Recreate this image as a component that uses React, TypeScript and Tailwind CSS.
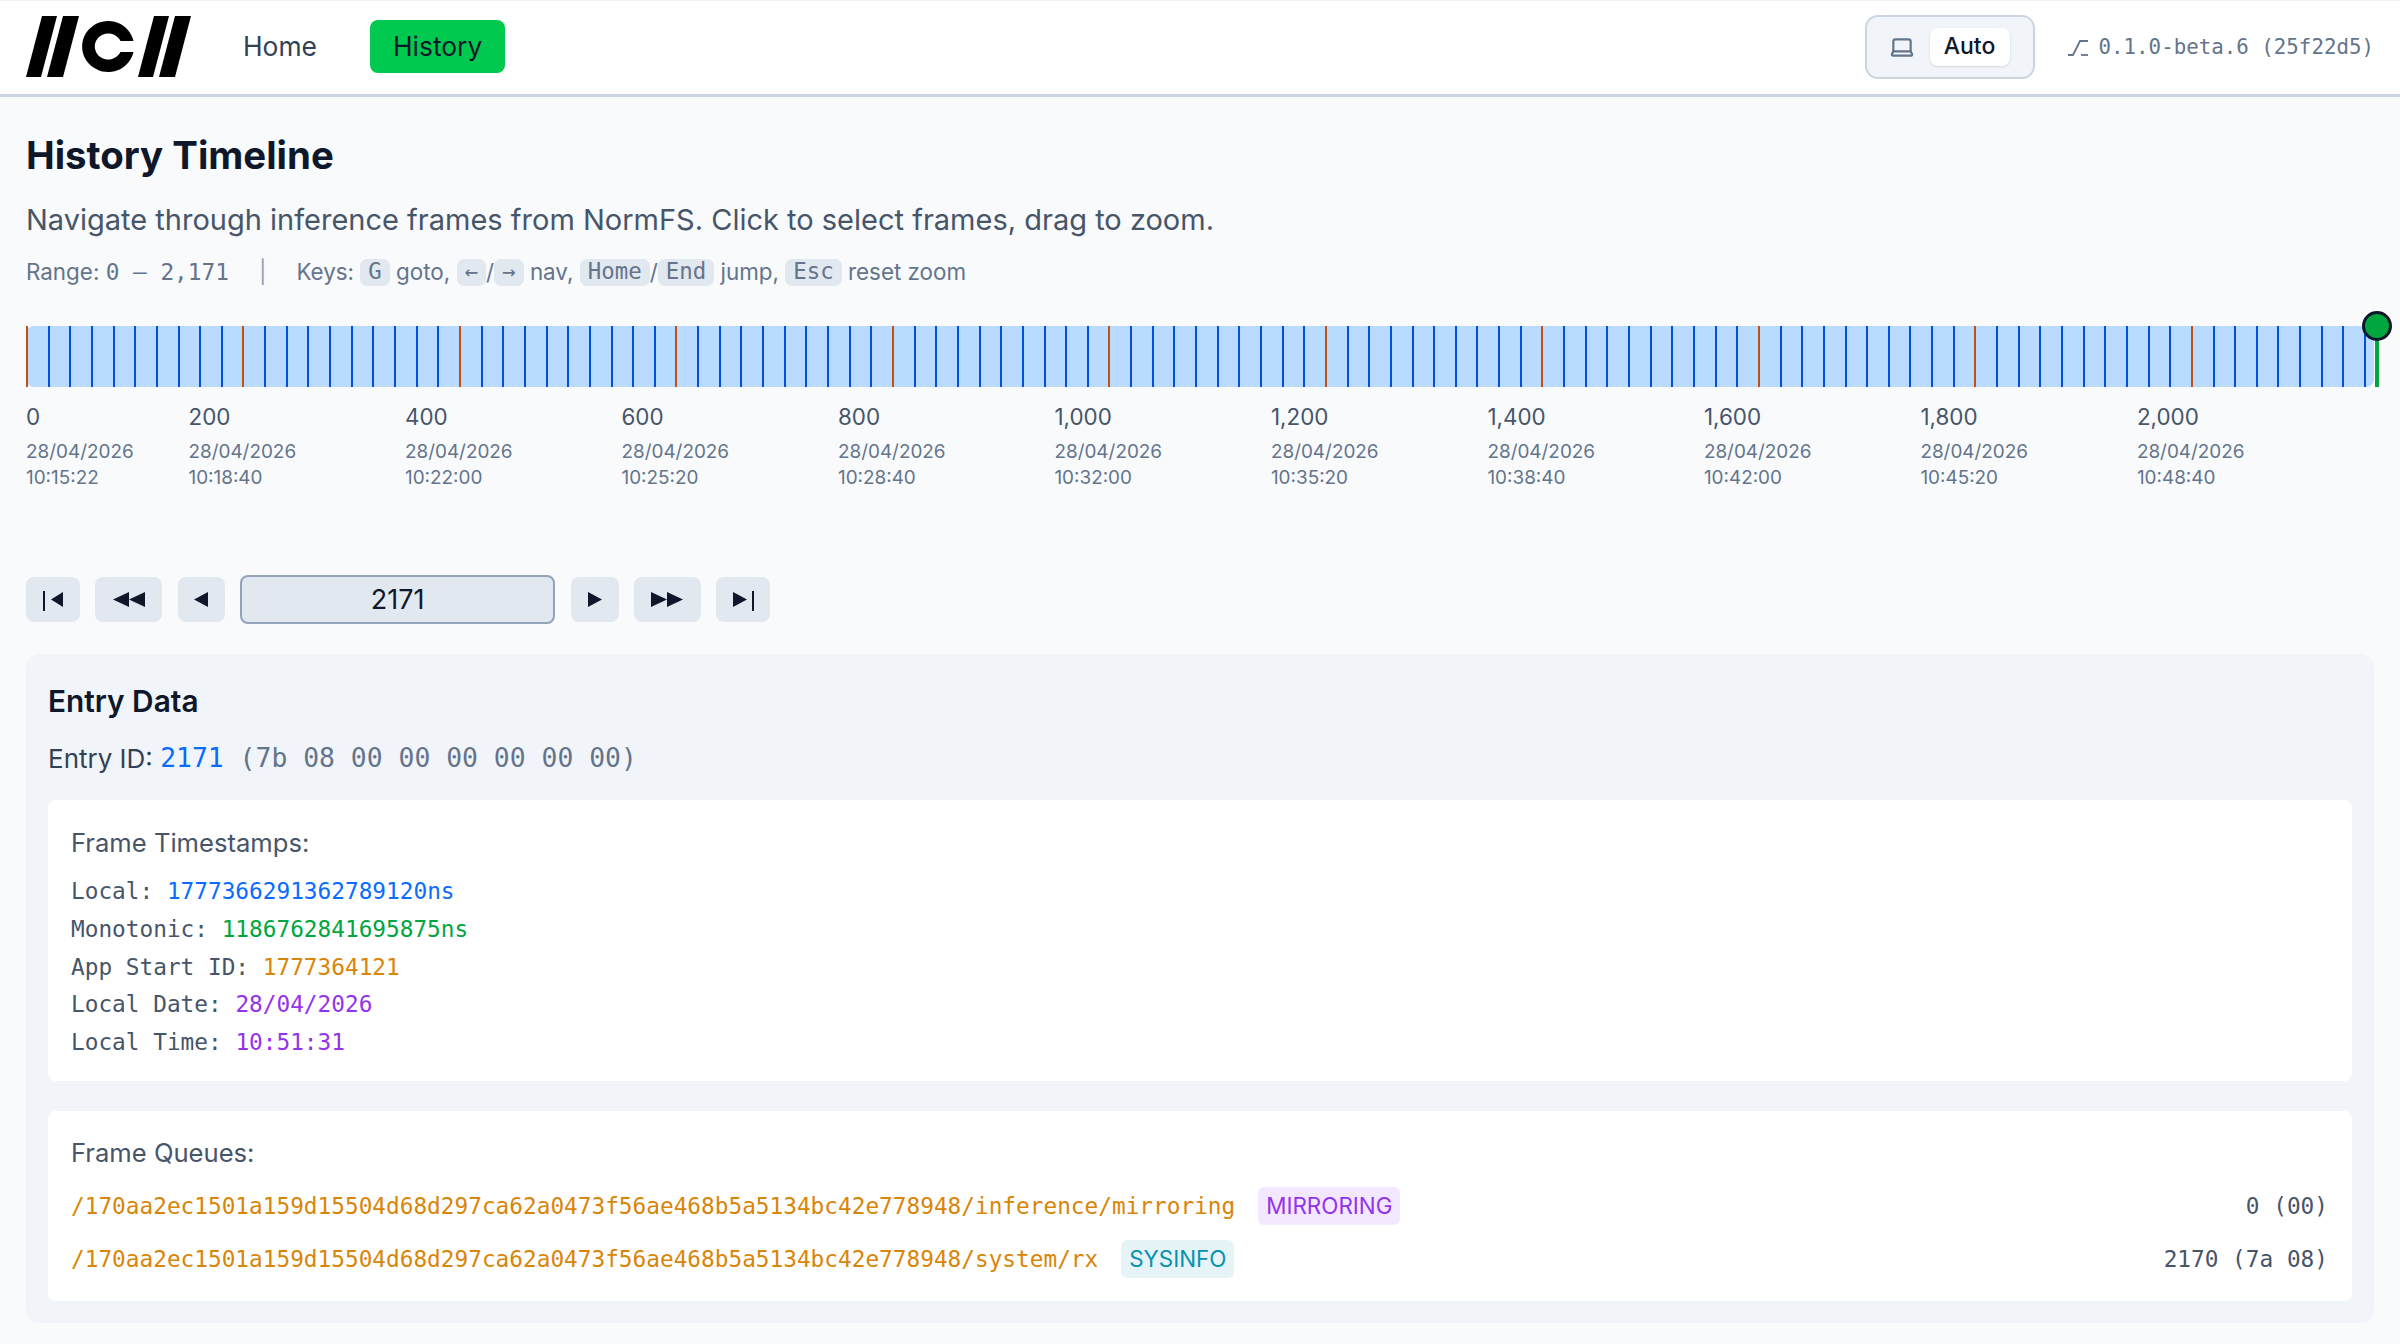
import React from 'react';
import { Laptop } from 'lucide-react';

const MONO = 'font-["DejaVu_Sans_Mono",monospace]';
const PX_PER_ENTRY = 2350 / 2171;

const Logo: React.FC = () => (
  <svg width="168" height="62" viewBox="0 0 168 62" className="shrink-0">
    <polygon points="0,61 15,61 31,0 16,0" fill="#000" />
    <polygon points="21,61 37,61 53,0 37,0" fill="#000" />
    <path d="M107.5 25 A26 25.5 0 1 0 107.5 36 L94.5 36 A13.5 13 0 1 1 94.5 25 Z" fill="#000" />
    <polygon points="112,61 127,61 143,0 128,0" fill="#000" />
    <polygon points="133,61 149,61 165,0 149,0" fill="#000" />
  </svg>
);

const Kbd: React.FC<{ children: React.ReactNode }> = ({ children }) => (
  <kbd className={`${MONO} bg-[#e2e8f0] rounded-[7px] px-[8px] h-[27px] flex items-center text-[22.4px] text-[#64748b]`}>{children}</kbd>
);

const Ctrl: React.FC<{ w: string; children: React.ReactNode }> = ({ w, children }) => (
  <button className={`${w} h-[45px] bg-[#e2e8f0] rounded-[8px] flex items-center justify-center`}>{children}</button>
);

const Tri: React.FC<{ dir: 'l' | 'r'; w?: number }> = ({ dir, w = 16 }) => (
  <svg width={w} height="15" viewBox={`0 0 ${w} 15`}>
    <polygon points={dir === 'l' ? `${w},0 ${w},15 0,7.5` : `0,0 0,15 ${w},7.5`} fill="#0f172a" />
  </svg>
);

const Bar = () => <span className="w-[2px] h-[20px] mt-[3px] bg-[#0f172a]" />;

const Timeline: React.FC = () => {
  const ticks = Array.from({ length: 109 }, (_, i) => i * 20);
  const labels = [
    ['0', '10:15:22'], ['200', '10:18:40'], ['400', '10:22:00'], ['600', '10:25:20'],
    ['800', '10:28:40'], ['1,000', '10:32:00'], ['1,200', '10:35:20'], ['1,400', '10:38:40'],
    ['1,600', '10:42:00'], ['1,800', '10:45:20'], ['2,000', '10:48:40'],
  ];
  return (
    <div className="relative h-[250px] mt-[39px]">
      <div className="relative h-[61px] bg-[#b8dbff] rounded-[8px]">
        {ticks.map((t) => (
          <span
            key={t}
            className={`absolute top-0 bottom-0 w-[2px] ${t % 200 === 0 ? 'bg-[#c2500f]' : 'bg-[#0050e6]'}`}
            style={{ left: t * PX_PER_ENTRY }}
          />
        ))}
        <span className="absolute right-[-5px] top-0 bottom-0 w-[4px] bg-[#00a63e]" />
        <span className="absolute right-[-18px] top-[-15px] w-[30px] h-[30px] rounded-full bg-[#00a63e] border-[3px] border-[#0f172a]" />
      </div>
      {labels.map(([n, time], i) => (
        <div key={n} className="absolute top-[75px]" style={{ left: i === 0 ? 0 : i * 200 * PX_PER_ENTRY - 54 }}>
          <div className="text-[22.4px] leading-[32px] text-[#475569]">{n}</div>
          <div className="mt-[6px] text-[18.9px] leading-[25.6px] text-[#64748b]">
            <div>28/04/2026</div>
            <div>{time}</div>
          </div>
        </div>
      ))}
    </div>
  );
};

const Stamp: React.FC<{ label: string; value: string; color: string }> = ({ label, value, color }) => (
  <div className="h-[37.8px] leading-[37.8px]">
    {label} <span className={color}>{value}</span>
  </div>
);

const Queue: React.FC<{ path: string; badge: string; badgeClass: string; value: string }> = ({ path, badge, badgeClass, value }) => (
  <div className="h-[38px] flex items-center justify-between">
    <div className="flex items-center gap-[23px]">
      <span className={`${MONO} text-[22.75px] text-[#d98508]`}>{path}</span>
      <span className={`h-[38px] px-[8px] rounded-[6px] flex items-center text-[22.4px] ${badgeClass}`}>{badge}</span>
    </div>
    <span className={`${MONO} text-[22.75px] text-[#475569]`}>{value}</span>
  </div>
);

const App: React.FC = () => (
  <div className='min-h-[1344px] bg-[#f8fafc] font-["Inter",sans-serif] text-[#0f172a]'>
    <header className="h-[97px] bg-white border-t border-t-[#f1f5f9] border-b-[3px] border-b-[#cbd5e1] pl-[26px] pr-[26px] pb-[2px] flex items-center">
      <Logo />
      <nav className="flex items-center ml-[49px] gap-[53px]">
        <a className="text-[26.4px] text-[#334155]">Home</a>
        <a className="h-[53px] px-[23px] flex items-center rounded-[8px] bg-[#00c950] text-[26.4px] text-[#0f172a]">History</a>
      </nav>
      <div className="ml-auto flex items-center">
        <div className="w-[170px] h-[64px] rounded-[13px] bg-[#f1f5f9] border-2 border-[#cbd5e1] flex items-center pl-[22px] gap-[15px]">
          <Laptop size={26} strokeWidth={2} className="text-[#64748b]" />
          <span className="w-[80px] h-[38px] rounded-[8px] bg-white shadow-sm flex items-center justify-center text-[23px] font-medium text-[#0f172a]">Auto</span>
        </div>
        <div className={`${MONO} ml-[33px] mt-[2px] flex items-center gap-[11px] text-[20.8px] text-[#64748b]`}>
          <svg width="20" height="16" viewBox="0 0 20 16" fill="none" stroke="#64748b" strokeWidth="1.8">
            <path d="M0 15 H5 L12 1 H20" />
            <path d="M13 15 H20" />
          </svg>
          0.1.0-beta.6 (25f22d5)
        </div>
      </div>
    </header>

    <main className="pl-[26px] pr-[26px] pt-[36px]">
      <h1 className="text-[38.4px] leading-[44px] font-bold">History Timeline</h1>
      <p className="mt-[21px] text-[29px] leading-[44px] text-[#475569]">Navigate through inference frames from NormFS. Click to select frames, drag to zoom.</p>
      <div className="mt-[15px] flex items-center h-[30px] text-[22.4px] text-[#64748b] whitespace-pre">
        <span>Range: </span>
        <span className={`${MONO} text-[22.75px]`}>0 – 2,171</span>
        <span className="mx-[30px] text-[#94a3b8]">|</span>
        <span>Keys: </span>
        <Kbd>G</Kbd>
        <span> goto, </span>
        <Kbd>←</Kbd>
        <span>/</span>
        <Kbd>→</Kbd>
        <span> nav, </span>
        <Kbd>Home</Kbd>
        <span>/</span>
        <Kbd>End</Kbd>
        <span> jump, </span>
        <Kbd>Esc</Kbd>
        <span> reset zoom</span>
      </div>

      <Timeline />

      <div className="flex items-center gap-[15.4px] mt-[-1px]">
        <Ctrl w="w-[54px]"><Bar /><span className="w-[6px]" /><Tri dir="l" w={12} /></Ctrl>
        <Ctrl w="w-[67px]"><Tri dir="l" /><Tri dir="l" /></Ctrl>
        <Ctrl w="w-[47px]"><Tri dir="l" w={14} /></Ctrl>
        <input
          readOnly
          value="2171"
          className="w-[315px] h-[49px] bg-[#e2e8f0] border-2 border-[#94a3b8] rounded-[8px] text-center text-[27px] text-[#0f172a]"
        />
        <Ctrl w="w-[48px]"><Tri dir="r" w={14} /></Ctrl>
        <Ctrl w="w-[67px]"><Tri dir="r" /><Tri dir="r" /></Ctrl>
        <Ctrl w="w-[54px]"><Tri dir="r" w={14} /><span className="w-[5px]" /><Bar /></Ctrl>
      </div>

      <section className="mt-[30px] bg-[#f1f5f9] rounded-[13px] px-[22px] pt-[28px] pb-[22px]">
        <h2 className="text-[29.8px] leading-[38px] font-semibold">Entry Data</h2>
        <div className="mt-[19px] h-[38px] flex items-center whitespace-pre text-[26px] text-[#334155]">
          <span>Entry ID: </span>
          <span className={`${MONO} text-[26.4px] text-[#0a6cff]`}>2171</span>
          <span className={`${MONO} text-[26.4px] text-[#64748b]`}> (7b 08 00 00 00 00 00 00)</span>
        </div>

        <div className="mt-[23px] bg-white rounded-[8px] px-[23px] pt-[28px] pb-[19px]">
          <div className="text-[25.6px] leading-[30px] text-[#475569]">Frame Timestamps:</div>
          <div className={`${MONO} mt-[15px] text-[22.75px] text-[#475569]`}>
            <Stamp label="Local:" value="1777366291362789120ns" color="text-[#0a6cff]" />
            <Stamp label="Monotonic:" value="1186762841695875ns" color="text-[#00a63e]" />
            <Stamp label="App Start ID:" value="1777364121" color="text-[#d98508]" />
            <Stamp label="Local Date:" value="28/04/2026" color="text-[#9333ea]" />
            <Stamp label="Local Time:" value="10:51:31" color="text-[#9333ea]" />
          </div>
        </div>

        <div className="mt-[30px] bg-white rounded-[8px] pl-[23px] pr-[24px] pt-[27px] pb-[23px]">
          <div className="text-[25.6px] leading-[30px] text-[#475569]">Frame Queues:</div>
          <div className="mt-[19px] flex flex-col gap-[15px]">
            <Queue
              path="/170aa2ec1501a159d15504d68d297ca62a0473f56ae468b5a5134bc42e778948/inference/mirroring"
              badge="MIRRORING"
              badgeClass="bg-[#f3e8ff] text-[#9333ea]"
              value="0 (00)"
            />
            <Queue
              path="/170aa2ec1501a159d15504d68d297ca62a0473f56ae468b5a5134bc42e778948/system/rx"
              badge="SYSINFO"
              badgeClass="bg-[#e6f4f7] text-[#0891b2]"
              value="2170 (7a 08)"
            />
          </div>
        </div>
      </section>
    </main>
  </div>
);

export default App;
